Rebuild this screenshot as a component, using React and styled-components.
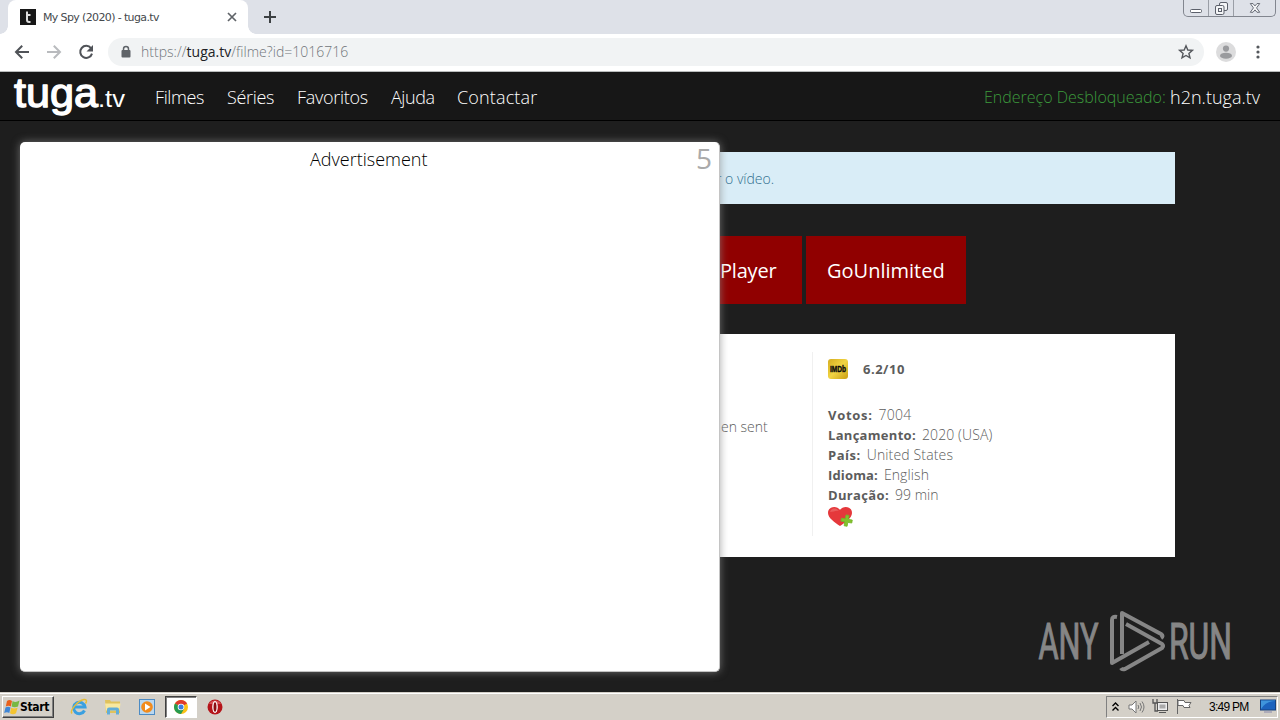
import React from "react";
import styled, { createGlobalStyle } from "styled-components";

const Global = createGlobalStyle`
  * { box-sizing: border-box; }
  html, body { margin: 0; padding: 0; background: #1e1e1e; overflow: hidden; }
  svg { overflow: visible; }
`;
const light = `"Open Sans", "Noto Sans", sans-serif`;

const Screen = styled.div`
  position: relative; width: 1280px; height: 720px; overflow: hidden;
  display: flex; flex-direction: column; font-family: ${light};
`;
const Text = styled.span`
  display: inline-block; white-space: nowrap; flex: none;
  font-size: ${(p) => p.$size || 14}px;
  font-weight: ${(p) => p.$weight || 300};
  letter-spacing: ${(p) => p.$ls || 0}px;
  color: ${(p) => p.$color || "inherit"};
`;

/* browser frame */
const TabStrip = styled.div`
  height: 34px; flex: none; background: #dee1e8; display: flex; padding-left: 8px; align-items: flex-start;
`;
const Tab = styled.div`
  position: relative; width: 240px; height: 34px; background: #fff; border-radius: 8px 8px 0 0;
  display: flex; align-items: center; padding: 0 11px 0 12px; color: #45494d;
  font-family: "DejaVu Sans", sans-serif;
  &::before, &::after {
    content: ""; position: absolute; bottom: 0; width: 8px; height: 8px;
  }
  &::before { left: -8px; background: radial-gradient(circle at 0 0, transparent 7.5px, #fff 8px); }
  &::after { right: -8px; background: radial-gradient(circle at 100% 0, transparent 7.5px, #fff 8px); }
`;
const TabTitle = styled.div` flex: 1; margin-left: 7px; line-height: 34px; `;
const NewTab = styled.div` margin: 10px 0 0 15px; height: 14px; line-height: 0; `;
const WinButtons = styled.div`
  margin-left: auto; margin-right: 4px; display: flex; height: 17px; width: 93px;
  border: 1px solid #82868f; border-top: 0; border-radius: 0 0 5px 5px;
`;
const WinButton = styled.div`
  width: ${(p) => p.$w}px; display: flex; justify-content: center; align-items: flex-end; padding-bottom: ${(p) => p.$pb}px;
  border-right: ${(p) => (p.$last ? "0" : "1px solid #9a9ea6")};
`;
const Toolbar = styled.div`
  height: 38px; flex: none; background: #fff; display: flex; align-items: center; padding: 0 15px 2px 14px;
  border-bottom: 1px solid #b9bcbc;
`;
const ToolIcons = styled.div` display: flex; gap: 16px; width: 94px; flex: none; `;
const Omnibox = styled.div`
  width: 1096px; height: 28px; flex: none; border-radius: 14px; background: #f1f3f4; display: flex; align-items: center;
  padding: 0 10px 0 12px; color: #70757a;
  svg:last-child { margin-left: auto; }
`;
const Url = styled.div` margin-left: 9px; line-height: 28px; b { color: #202124; font-weight: 400; } `;
const Right = styled.div` display: flex; align-items: center; gap: 20px; margin-left: 12px; flex: none; `;

/* site */
const Nav = styled.nav`
  height: 49px; flex: none; background: #171717; border-bottom: 1px solid #000; display: flex; align-items: center;
  color: #fff; padding-right: 20px;
`;
const Links = styled.div` display: flex; margin-left: 24px; padding-top: 3px; `;
const LinkItem = styled.div` width: ${(p) => p.$w}px; line-height: 26px; `;
const Address = styled.div`
  margin-left: auto; width: 276px; display: flex; justify-content: space-between; line-height: 26px; padding-top: 2px;
`;
const Page = styled.main`
  flex: 1; min-height: 0; background: #1e1e1e; padding: 31px 105px 0; display: flex; flex-direction: column;
`;
const Alert = styled.div`
  height: 52px; flex: none; background: #d9edf7; color: #31708f; padding-left: 611px; line-height: 52px;
`;
const Players = styled.div` display: flex; gap: 4px; margin: 32px 0 30px 537px; flex: none; `;
const PlayerButton = styled.div`
  width: 160px; height: 68px; background: #900000; color: #fff; line-height: 70px; padding-left: ${(p) => p.$pl}px;
`;
const Card = styled.section`
  height: 223px; flex: none; background: #fff; color: #5c5c5c; display: flex; padding: 18px 0 21px;
`;
const Synopsis = styled.div` width: 708px; border-right: 1px solid #f0f0f0; padding: 64px 0 0 616px; line-height: 20px; `;
const Facts = styled.div` padding: 7px 0 0 15px; `;
const Rating = styled.div` display: flex; align-items: center; gap: 15px; height: 20px; margin-bottom: 26px; `;
const Fact = styled.div` display: flex; gap: 6px; height: 20px; line-height: 20px; `;
const HeartSlot = styled.div` padding-top: 1px; line-height: 0; `;

const Modal = styled.div`
  position: absolute; left: 20px; top: 142px; width: 700px; height: 530px; background: #fff; border-radius: 5px;
  box-shadow: 0 0 9px rgba(140,140,140,.75); border: 1px solid #c4c4c4; border-width: 0 1px 1px 0;
  display: flex; justify-content: space-between; padding: 0 7px 0 290px; color: #000;
`;
const ModalTitle = styled.div` line-height: 34px; `;
const Counter = styled.div` line-height: 32px; `;
const Watermark = styled.svg` position: absolute; left: 1036px; top: 606px; `;

/* taskbar */
const Taskbar = styled.footer`
  height: 28px; flex: none; background: #d4d0c8; border-top: 1px solid #d4d0c8; box-shadow: inset 0 1px #fff;
  display: flex; align-items: center; padding: 2px 2px 2px;
`;
const StartButton = styled.div`
  width: 52px; height: 22px; background: #d4d0c8; border: 1px solid; border-color: #fff #404040 #404040 #fff;
  box-shadow: inset -1px -1px #808080; display: flex; align-items: center; padding-left: 1px; gap: 0; color: #000;
  font-family: "DejaVu Sans Condensed", "DejaVu Sans", sans-serif;
`;
const Launchers = styled.div` display: flex; align-items: center; margin-left: 8px; `;
const Launcher = styled.div`
  width: ${(p) => (p.$active ? 32 : 34)}px; height: 22px; display: flex; align-items: center; justify-content: center;
  ${(p) => p.$active && `background:#fff; border:1px solid; border-color:#404040 #fff #fff #404040; box-shadow: inset 1px 1px #808080; margin:0 1px;`}
`;
const Tray = styled.div`
  margin-left: auto; width: 172px; height: 22px; border: 1px solid; border-color: #808080 #fff #fff #808080;
  display: flex; align-items: center; padding: 0 1px 0 5px; color: #000; font-family: "Liberation Sans", sans-serif;
`;
const TrayIcons = styled.div` display: flex; align-items: center; gap: 8px; width: 97px; `;

const facts = [
  ["Votos:", "7004", 0.7, 0.2],
  ["Lançamento:", "2020 (USA)", 0.3, 0.1],
  ["País:", "United States", 0.5, 0.15],
  ["Idioma:", "English", 0.15, 0.1],
  ["Duração:", "99 min", 0.35, 0],
];

const Arrow = ({ color, flip }) => (
  <svg width="16" height="16" viewBox="0 0 16 16" fill="none" stroke={color} strokeWidth="2">
    <path d={flip ? "M1 8h12.5M7.8 1.8L14 8l-6.2 6.2" : "M15 8H2.5M8.2 1.8L2 8l6.2 6.2"} />
  </svg>
);

export default function App() {
  return (
    <Screen>
      <Global />
      <TabStrip>
        <Tab>
          <svg width="16" height="16" viewBox="0 0 16 16">
            <rect width="16" height="16" fill="#171717" />
            <path d="M7 2.5V11Q7 13 9 13H10.5M7 6H10.5" stroke="#ddd" strokeWidth="2" fill="none" />
          </svg>
          <TabTitle><Text $size={11} $weight={400} $ls={-0.63}>My Spy (2020) - tuga.tv</Text></TabTitle>
          <svg width="10" height="10" viewBox="0 0 10 10" stroke="#5f6368" strokeWidth="1.7"><path d="M1 1l8 8M9 1L1 9" /></svg>
        </Tab>
        <NewTab>
          <svg width="14" height="14" viewBox="0 0 14 14" stroke="#3c4043" strokeWidth="2"><path d="M7 1v12M1 7h12" /></svg>
        </NewTab>
        <WinButtons>
          <WinButton $w={25} $pb={3}><svg width="12" height="4"><rect x=".5" y=".5" width="11" height="3" rx="1" fill="#fff" stroke="#5c606b" /></svg></WinButton>
          <WinButton $w={25} $pb={1}>
            <svg width="13" height="13" fill="#f4f5f7" stroke="#5c606b"><rect x="4.5" y=".5" width="8" height="8" rx="1.5" /><rect x=".5" y="3.5" width="8.5" height="9" rx="1.5" /><rect x="3.5" y="6.5" width="3" height="3" /></svg>
          </WinButton>
          <WinButton $w={41} $pb={3} $last>
            <svg width="12" height="10" viewBox="0 0 12 11" fill="#f4f5f7" stroke="#5c606b"><path d="M.8 .6h3L6 3.2 8.2.6h3L7.7 5.4l3.5 4.8h-3L6 7.6l-2.2 2.6h-3l3.5-4.8z" /></svg>
          </WinButton>
        </WinButtons>
      </TabStrip>
      <Toolbar>
        <ToolIcons>
          <Arrow color="#505358" />
          <Arrow color="#b9bbbe" flip />
          <svg width="16" height="16" viewBox="0 0 16 16" fill="none" stroke="#505358" strokeWidth="2">
            <path d="M13 4.2A6 6 0 1 0 14 9.6" /><path d="M15 1v6.5H8.5z" fill="#505358" stroke="none" />
          </svg>
        </ToolIcons>
        <Omnibox>
          <svg width="12" height="14" viewBox="0 0 12 14"><path d="M3.5 6V4a2.5 2.5 0 0 1 5 0v2" fill="none" stroke="#5f6368" strokeWidth="1.5" /><rect x="1.5" y="5" width="9" height="7.5" rx="1" fill="#5f6368" /></svg>
          <Url><Text $size={14} $ls={0.02}>https://<b>tuga.tv</b>/filme?id=1016716</Text></Url>
          <svg width="16" height="16" viewBox="0 0 16 16" fill="none" stroke="#55585d" strokeWidth="1.4"><path d="M8 1.8l1.8 4.2 4.6.4-3.5 3 1.1 4.5L8 11.5l-4 2.4 1.1-4.5-3.5-3L6.2 6z" /></svg>
        </Omnibox>
        <Right>
          <svg width="20" height="20" viewBox="0 0 20 20"><circle cx="10" cy="10" r="10" fill="#dcdcdd" /><circle cx="10" cy="6.6" r="3.1" fill="#9a9b9e" /><ellipse cx="10" cy="13.7" rx="6" ry="3" fill="#9a9b9e" /></svg>
          <svg width="4" height="16" fill="#55585d"><circle cx="2" cy="3" r="1.6" /><circle cx="2" cy="8" r="1.6" /><circle cx="2" cy="13" r="1.6" /></svg>
        </Right>
      </Toolbar>
      <Nav>
        <svg width="131" height="48" viewBox="0 0 131 48" fill="#fff" fontFamily="Liberation Sans, sans-serif">
          <text x="14" y="35" fontSize="41" stroke="#fff" strokeWidth="1.3" strokeLinejoin="round" textLength="84" lengthAdjust="spacingAndGlyphs">tuga</text>
          <text x="98" y="35" fontSize="24" textLength="27" lengthAdjust="spacingAndGlyphs">.tv</text>
        </svg>
        <Links>
          <LinkItem $w={72}><Text $size={18} $ls={-0.4}>Filmes</Text></LinkItem>
          <LinkItem $w={70}><Text $size={18} $ls={-0.35}>Séries</Text></LinkItem>
          <LinkItem $w={94}><Text $size={18} $ls={-0.3}>Favoritos</Text></LinkItem>
          <LinkItem $w={66}><Text $size={18} $ls={-0.45}>Ajuda</Text></LinkItem>
          <LinkItem $w={90}><Text $size={18} $ls={0.15}>Contactar</Text></LinkItem>
        </Links>
        <Address>
          <Text $size={16} $color="#3c9a3c">Endereço Desbloqueado:</Text>
          <Text $size={18}>h2n.tuga.tv</Text>
        </Address>
      </Nav>
      <Page>
        <Alert><Text $size={14}>r o vídeo.</Text></Alert>
        <Players>
          <PlayerButton $pl={78}><Text $size={20} $weight={400} $ls={-0.2}>Player</Text></PlayerButton>
          <PlayerButton $pl={21}><Text $size={20} $weight={400}>GoUnlimited</Text></PlayerButton>
        </Players>
        <Card>
          <Synopsis><Text>en sent</Text></Synopsis>
          <Facts>
            <Rating>
              <svg width="20" height="20" viewBox="0 0 20 20">
                <defs><linearGradient id="gold" x1="0" y1="0" x2="1" y2="1"><stop offset="0" stopColor="#d5ad20" /><stop offset=".5" stopColor="#f1d443" /><stop offset="1" stopColor="#c99d13" /></linearGradient></defs>
                <rect width="20" height="20" rx="3" fill="url(#gold)" />
                <text x="2" y="13.2" fontFamily="Liberation Sans, sans-serif" fontWeight="700" fontSize="9" stroke="#151515" strokeWidth=".4" textLength="16" lengthAdjust="spacingAndGlyphs">IMDb</text>
              </svg>
              <Text $size={13} $weight={700} $ls={0.5}>6.2/10</Text>
            </Rating>
            {facts.map(([k, v, a, b]) => (
              <Fact key={k}><Text $weight={700} $size={13} $ls={a}>{k}</Text><Text $ls={b}>{v}</Text></Fact>
            ))}
            <HeartSlot>
              <svg width="25" height="22" viewBox="0 0 25 22">
                <path d="M12 20C7 16.5 0 12 0 7 0 0 9-1 12 4 15-1 24 0 24 7c0 5-7 9.5-12 13z" fill="#e5383b" />
                <path d="M2 6C3 2 8 1 11 5c-3-1-6 1-9 1z" fill="#ea5c5c" />
                <path d="M17 9h3v4h4v3h-4v4h-3v-4h-4v-3h4z" fill="#83c22c" stroke="#74b428" strokeWidth=".8" transform="rotate(10 18 15)" />
              </svg>
            </HeartSlot>
          </Facts>
        </Card>
      </Page>
      <Taskbar>
        <StartButton>
          <svg width="16" height="16" viewBox="0 0 16 16">
            <path d="M3 2Q5.5 0 8 2L6.8 7.5Q4.5 6 1.8 7.5z" fill="#e8601c" /><path d="M8.6 2Q11.5 4 15.5 1.5L14 7.5Q10.5 9 7.6 7.5z" fill="#77b843" />
            <path d="M1.5 8.5Q4 7 6.5 8.5L5.3 14Q3 12.5.2 14z" fill="#3f86d6" /><path d="M7.2 8.8Q10 10 13.6 8.7L12 14.3Q9 16 6 14.3z" fill="#f4c430" />
          </svg>
          <Text $size={12} $weight={700} $ls={-0.35}>Start</Text>
        </StartButton>
        <Launchers>
          <Launcher>
            <svg width="18" height="18" viewBox="0 0 18 18" fill="none"><path d="M14.500 12.500A5.700 5.700 0 1 1 15 9H5" stroke="#3aa0e0" strokeWidth="3" /><path d="M2 15.500C-.5 13 7 3 14 1.500c3-.5 3 2 1.500 4" stroke="#e6bd38" strokeWidth="1.500" /></svg>
          </Launcher>
          <Launcher>
            <svg width="18" height="18" viewBox="0 0 18 18"><path d="M1 2h5l1 1.500h9V15H2z" fill="#e0c25c" /><path d="M1 5.500h15.500l-1 7H2z" fill="#f8e8a0" /><path d="M3 16.500v-5q0-2 2-2h8q2 0 2 2v5h-3v-4H6v4z" fill="#62add8" /></svg>
          </Launcher>
          <Launcher>
            <svg width="16" height="16" viewBox="0 0 16 16"><rect x=".5" y=".5" width="15" height="15" fill="#b9d7f0" stroke="#4c8bc4" /><circle cx="8" cy="8" r="5.800" fill="#f28b1c" /><path d="M6 4.500v7L11.500 8z" fill="#fff" /></svg>
          </Launcher>
          <Launcher $active>
            <svg width="14" height="14" viewBox="0 0 14 14"><circle cx="7" cy="7" r="7" fill="#fbc116" /><path d="M7 7L.94 3.500A7 7 0 0 1 13.060 3.500z" fill="#df3a2d" /><path d="M7 7L.94 3.500A7 7 0 0 0 7 14l3-5z" fill="#279b50" /><circle cx="7" cy="7" r="3.300" fill="#fff" /><circle cx="7" cy="7" r="2.500" fill="#3c7de0" /></svg>
          </Launcher>
          <Launcher>
            <svg width="16" height="16" viewBox="0 0 16 16"><circle cx="8" cy="8" r="7.500" fill="#b5141a" /><path d="M2 5A7 7 0 0 1 14 5z" fill="#d95055" /><ellipse cx="8" cy="8" rx="2.800" ry="6" fill="#fff" /><ellipse cx="8" cy="8" rx="1.500" ry="4.800" fill="#8d0d12" /></svg>
          </Launcher>
        </Launchers>
        <Tray>
          <TrayIcons>
            <svg width="7" height="10" viewBox="0 0 7 10" fill="none" stroke="#000" strokeWidth="1.400"><path d="M.5 4l3-3 3 3M.5 8.500l3-3 3 3" /></svg>
            <svg width="17" height="14" viewBox="0 0 17 14" fill="none" stroke="#777"><path d="M2 5h3l4-4v12L5 9H2z" fill="#fff" /><path d="M11 5q1.500 2 0 4M13 3q3 4 0 8M15 1.500q4 5.500 0 11" /></svg>
            <svg width="16" height="15" viewBox="0 0 16 15" stroke="#555" fill="#eee"><rect x="5.500" y="3.500" width="10" height="8" /><path d="M7 13.500h7" /><path d="M1 0v4h4V0M3 4v8h3" fill="none" strokeWidth="1.300" /><rect x="7.500" y="5.500" width="6" height="4" fill="#aaa" stroke="none" /></svg>
            <svg width="16" height="15" viewBox="0 0 16 15" fill="#fff" stroke="#666"><path d="M1.500 0v15M2 1.500h6l1 2h6l-2 3 1 2H8l-1-2H2z" /></svg>
          </TrayIcons>
          <Text $size={12} $weight={400} $ls={-0.75}>3:49 PM</Text>
          <svg width="16" height="15" viewBox="0 0 16 15" style={{ marginLeft: "auto" }}><rect x=".5" y="1" width="15" height="10" fill="#1c62bd" stroke="#17417f" /><path d="M1 10Q6 2 15 2V1.500H1z" fill="#3f94dc" /><path d="M4 13h8" stroke="#88a" /></svg>
        </Tray>
      </Taskbar>
      <Modal>
        <ModalTitle><Text $size={18}>Advertisement</Text></ModalTitle>
        <Counter><Text $size={28} $weight={400} $color="#aaa">5</Text></Counter>
      </Modal>
      <Watermark width="198" height="70" viewBox="0 0 198 70" fill="#868686" fontFamily="Roboto, sans-serif">
        <g stroke="#868686" strokeWidth=".9">
          <text transform="translate(2.500 53) scale(1 1.300)" fontSize="39" fontWeight="400" textLength="60" lengthAdjust="spacingAndGlyphs">ANY</text>
          <text transform="translate(133 53) scale(1 1.300)" fontSize="39" fontWeight="400" textLength="63" lengthAdjust="spacingAndGlyphs">RUN</text>
        </g>
        <g fill="none" stroke="#868686" strokeWidth="4" strokeLinejoin="round">
          <path d="M86 48V7l39 21q3 2 0 4" /><path d="M81 11q-5-1-5 3v43l37-21" /><path d="M90 18l36 20q2 2 0 4L89 63q-3 1-4-1" />
        </g>
      </Watermark>
    </Screen>
  );
}
